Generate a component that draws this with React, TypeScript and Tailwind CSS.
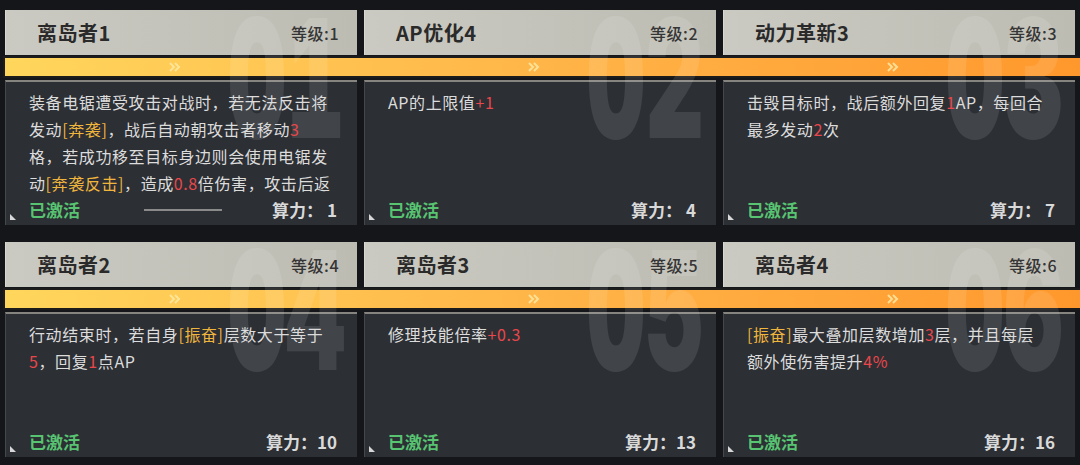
import React from 'react';

type Seg = { t: string; c?: 'r' | 'y' };
type Card = { no: string; title: string; level: number; power: number; lines: Seg[][]; scroll?: boolean };

const rows: Card[][] = [
  [
    {
      no: '01', title: '离岛者1', level: 1, power: 1, scroll: true,
      lines: [
        [{ t: '装备电锯遭受攻击对战时，若无法反击将' }],
        [{ t: '发动' }, { t: '[奔袭]', c: 'y' }, { t: '，战后自动朝攻击者移动' }, { t: '3', c: 'r' }],
        [{ t: '格，若成功移至目标身边则会使用电锯发' }],
        [{ t: '动' }, { t: '[奔袭反击]', c: 'y' }, { t: '，造成' }, { t: '0.8', c: 'r' }, { t: '倍伤害，攻击后返' }],
      ],
    },
    { no: '02', title: 'AP优化4', level: 2, power: 4, lines: [[{ t: 'AP的上限值' }, { t: '+1', c: 'r' }]] },
    {
      no: '03', title: '动力革新3', level: 3, power: 7,
      lines: [
        [{ t: '击毁目标时，战后额外回复' }, { t: '1', c: 'r' }, { t: 'AP，每回合' }],
        [{ t: '最多发动' }, { t: '2', c: 'r' }, { t: '次' }],
      ],
    },
  ],
  [
    {
      no: '04', title: '离岛者2', level: 4, power: 10,
      lines: [
        [{ t: '行动结束时，若自身' }, { t: '[振奋]', c: 'y' }, { t: '层数大于等于' }],
        [{ t: '5', c: 'r' }, { t: '，回复' }, { t: '1', c: 'r' }, { t: '点AP' }],
      ],
    },
    { no: '05', title: '离岛者3', level: 5, power: 13, lines: [[{ t: '修理技能倍率' }, { t: '+0.3', c: 'r' }]] },
    {
      no: '06', title: '离岛者4', level: 6, power: 16,
      lines: [
        [{ t: '[振奋]', c: 'y' }, { t: '最大叠加层数增加' }, { t: '3', c: 'r' }, { t: '层，并且每层' }],
        [{ t: '额外使伤害提升' }, { t: '4%', c: 'r' }],
      ],
    },
  ],
];

const segColor = (c?: 'r' | 'y') => (c === 'r' ? 'text-[#e8474b]' : c === 'y' ? 'text-[#f0b53d]' : '');

const Chevrons = () => (
  <svg width="12" height="10" viewBox="0 0 12 10" fill="none" stroke="#ffe9a2" strokeWidth="2" strokeOpacity="0.85">
    <path d="M1 1l4 4-4 4" />
    <path d="M6 1l4 4-4 4" />
  </svg>
);

const Corner = () => (
  <svg width="6" height="6" viewBox="0 0 6 6" className="absolute bottom-[5px] left-[4px]">
    <polygon points="0,0 0,6 6,6" fill="#d8d8d8" />
  </svg>
);

function Row({ cards }: { cards: Card[] }) {
  return (
    <div className="relative pl-[5px]">
      <div className="grid grid-cols-[352px_352px_352px] gap-x-[7px]">
        {cards.map((c) => (
          <div key={c.no} className="flex h-[45px] items-center justify-between border-l border-[#d8d7d0] bg-linear-to-r from-[#cbcac2] to-[#bdbcb3] pl-[31px] pr-[18px]">
            <span className="relative z-10 text-[20px] font-bold tracking-[0.5px] text-[#2a2a2a]">{c.title}</span>
            <span className="relative z-10 text-[16px] font-medium tracking-[0.5px] text-[#353535]">等级:{c.level}</span>
          </div>
        ))}
      </div>

      <div className="-ml-[2px] mt-px grid h-[22px] w-[1077px] grid-cols-[352px_352px_352px] gap-x-[7px] border-y-2 border-l-2 border-[#1c1c1c] bg-linear-to-r from-[#ffd65c] via-[#ffb548] to-[#ff982c]">
        {cards.map((c) => (
          <div key={c.no} className="flex items-center justify-center pr-[12px]">
            <Chevrons />
          </div>
        ))}
      </div>

      <div className="mt-[2px] grid grid-cols-[352px_352px_352px] gap-x-[7px]">
        {cards.map((c) => (
          <div key={c.no} className="relative flex h-[145px] flex-col border-t-2 border-l border-t-[#85847f] border-l-[#44474c] bg-[#2c2f34] pl-[23px] pr-[20px]">
            <div className="relative z-10 h-[115px] overflow-hidden pt-[7px] text-[16px] leading-[27px] tracking-[0.6px] text-[#dcdcdc]">
              {c.lines.map((line, i) => (
                <div key={i} className="whitespace-nowrap">
                  {line.map((s, j) => (
                    <span key={j} className={segColor(s.c)}>{s.t}</span>
                  ))}
                </div>
              ))}
            </div>
            <div className="relative z-10 mt-auto grid grid-cols-[1fr_auto_1fr] items-center pb-[4px] text-[17px] font-bold leading-[22px]">
              <span className="justify-self-start text-[#58c472]">已激活</span>
              {c.scroll ? <div className="h-[2px] w-[78px] bg-[#8a8a8a]" /> : <div />}
              <span className="justify-self-end text-[#d9d9d9]">算力：{c.power < 10 ? ' ' : ''}{c.power}</span>
            </div>
            <Corner />
          </div>
        ))}
      </div>

      <div className="pointer-events-none absolute inset-y-0 left-[5px] grid grid-cols-[352px_352px_352px] gap-x-[7px]">
        {cards.map((c) => (
          <div key={c.no} className="relative overflow-hidden">
            <span className="absolute -top-[14px] right-[12px] origin-right scale-x-55 font-['Inter',sans-serif] text-[165px] font-black leading-none tabular-nums text-white/10">
              {c.no}
            </span>
          </div>
        ))}
      </div>
    </div>
  );
}

export default function App() {
  return (
    <div className="flex h-[465px] w-[1080px] flex-col gap-[17px] overflow-hidden bg-[#15161a] pt-[10px] font-['Noto_Sans_CJK_SC','Noto_Sans',sans-serif]">
      {rows.map((r, i) => (
        <Row key={i} cards={r} />
      ))}
    </div>
  );
}
